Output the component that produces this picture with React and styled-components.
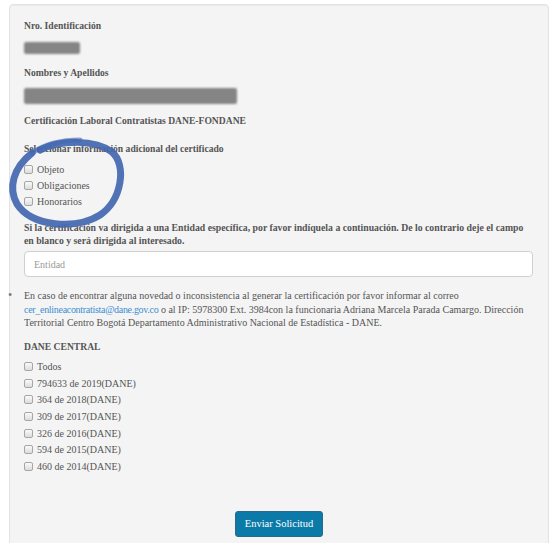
import React from 'react';
import styled, { createGlobalStyle } from 'styled-components';

const GlobalStyle = createGlobalStyle`
  html, body {
    margin: 0;
    padding: 0;
    background: #fff;
  }
  body {
    font-family: "Liberation Serif", "Times New Roman", serif;
    font-size: 10px;
    color: #555;
  }
`;

const Page = styled.div`
  position: relative;
  padding: 4px 0 0 9px;
  width: 540px;
`;

const Well = styled.div`
  background: #f4f4f4;
  border: 1px solid #e3e3e3;
  border-radius: 4px;
  box-shadow: inset 0 1px 1px rgba(0, 0, 0, 0.04);
  padding: 14px 14px 20px 14px;
  display: flex;
  flex-direction: column;
  min-height: 560px;
  box-sizing: border-box;
`;

const Label = styled.div`
  font-weight: bold;
  font-size: 9.6px;
  line-height: 13px;
  margin-top: ${(p) => p.$top || 0}px;
  color: #555;
`;

const Redacted = styled.div`
  width: ${(p) => p.$w}px;
  height: ${(p) => p.$h}px;
  margin-top: ${(p) => p.$top}px;
  background: #858585;
  border-radius: 2px;
  filter: blur(1.2px);
`;

const CheckList = styled.div`
  display: flex;
  flex-direction: column;
  margin-top: ${(p) => p.$top}px;
`;

const CheckRow = styled.label`
  display: flex;
  align-items: center;
  height: ${(p) => p.$h || 16}px;
  gap: 4px;
  line-height: 13px;
`;

const Box = styled.input.attrs({ type: 'checkbox' })`
  appearance: none;
  margin: 0;
  width: 9px;
  height: 9px;
  border: 1px solid #a6a6a6;
  border-radius: 2px;
  background: linear-gradient(#fafafa, #dcdcdc);
  flex: none;
`;

const Paragraph = styled.div`
  font-weight: bold;
  font-size: 9.75px;
  line-height: 13px;
  margin-top: ${(p) => p.$top}px;
  color: #555;
`;

const Input = styled.input`
  margin-top: 4px;
  height: 26px;
  width: 509px;
  box-sizing: border-box;
  border: 1px solid #d0d0d0;
  border-radius: 4px;
  background: #fff;
  padding: 0 9px;
  font-family: inherit;
  font-size: 10px;
  color: #555;
  outline: none;
  &::placeholder {
    color: #9a9a9a;
  }
`;

const Notice = styled.div`
  display: flex;
  margin: 12px 0 0 -16px;
  line-height: 13.5px;
`;

const Bullet = styled.span`
  width: 16px;
  flex: none;
  font-size: 12px;
  line-height: 13.5px;
  color: #777;
`;

const Link = styled.a`
  color: #3d8fd1;
  text-decoration: none;
  letter-spacing: -0.3px;
`;

const Footer = styled.div`
  display: flex;
  justify-content: center;
  margin-top: 36px;
`;

const Button = styled.button`
  height: 26px;
  width: 88px;
  background: #0b7aa8;
  border: 1px solid #2a6a86;
  border-radius: 3px;
  color: #fff;
  font-family: inherit;
  font-size: 10.5px;
  padding: 0;
`;

const Scribble = styled.svg`
  position: absolute;
  left: 0;
  top: 0;
  pointer-events: none;
`;

const options = ['Objeto', 'Obligaciones', 'Honorarios'];
const resolutions = [
  'Todos',
  '794633 de 2019(DANE)',
  '364 de 2018(DANE)',
  '309 de 2017(DANE)',
  '326 de 2016(DANE)',
  '594 de 2015(DANE)',
  '460 de 2014(DANE)',
];

export default function App() {
  return (
    <>
      <GlobalStyle />
      <Page>
        <Well>
          <Label>Nro. Identificación</Label>
          <Redacted $w={56} $h={12} $top={10} />
          <Label $top={12}>Nombres y Apellidos</Label>
          <Redacted $w={213} $h={16} $top={9} />
          <Label $top={10}>Certificación Laboral Contratistas DANE-FONDANE</Label>
          <Label $top={15}>Seleccionar información adicional del certificado</Label>
          <CheckList $top={6}>
            {options.map((o) => (
              <CheckRow key={o}>
                <Box />
                {o}
              </CheckRow>
            ))}
          </CheckList>
          <Paragraph $top={12}>
            Si la certificación va dirigida a una Entidad específica, por favor indíquela a continuación. De lo contrario deje el campo en blanco y será dirigida al interesado.
          </Paragraph>
          <Input placeholder="Entidad" />
          <Notice>
            <Bullet>•</Bullet>
            <span>
              En caso de encontrar alguna novedad o inconsistencia al generar la certificación por favor informar al correo{' '}
              <Link href="#">cer_enlineacontratista@dane.gov.co</Link> o al IP: 5978300 Ext. 3984con la funcionaria Adriana Marcela Parada Camargo. Dirección Territorial Centro Bogotá Departamento Administrativo Nacional de Estadística - DANE.
            </span>
          </Notice>
          <Label $top={10}>DANE CENTRAL</Label>
          <CheckList $top={6}>
            {resolutions.map((r) => (
              <CheckRow key={r} $h={16.6}>
                <Box />
                {r}
              </CheckRow>
            ))}
          </CheckList>
          <Footer>
            <Button>Enviar Solicitud</Button>
          </Footer>
        </Well>
        <Scribble width="160" height="240" viewBox="0 0 160 240">
          <path
            d="M 40 150 C 60 140, 95 139, 112 152 C 127 165, 122 200, 100 215 C 76 230, 32 227, 17 204 C 8 188, 13 168, 32 153"
            fill="none"
            stroke="#4267b0"
            strokeWidth="7"
            strokeLinecap="round"
            opacity="0.92"
          />
          <path
            d="M 32 153 C 45 144, 62 140, 80 140"
            fill="none"
            stroke="#4267b0"
            strokeWidth="5"
            strokeLinecap="round"
            opacity="0.6"
          />
        </Scribble>
      </Page>
    </>
  );
}
